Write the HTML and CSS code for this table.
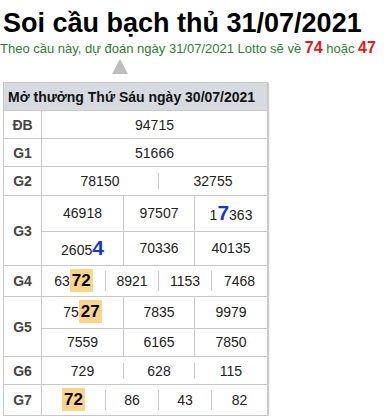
FILE: index.html
```html
<!DOCTYPE html>
<html lang="vi">
<head>
    <meta charset="UTF-8">
    <meta name="viewport" content="width=device-width, initial-scale=1.0">
    <title>Soi cầu bạch thủ 31/07/2021</title>
    <link rel="stylesheet" href="styles.css">
</head>
<body>
    <h1 class="title">Soi cầu bạch thủ 31/07/2021</h1>
    <p class="predict">Theo cầu này, dự đoán ngày 31/07/2021 Lotto sẽ về <b>74</b> hoặc <b>47</b></p>
    <div class="arrow"></div>

    <!-- Kết quả ngày hôm trước -->
    <table class="result">
        <tr class="head">
            <th colspan="2">Mở thưởng Thứ Sáu ngày 30/07/2021</th>
        </tr>
        <tr class="r28">
            <th>ĐB</th>
            <td>94715</td>
        </tr>
        <tr class="r28">
            <th>G1</th>
            <td>51666</td>
        </tr>
        <tr class="r29">
            <th>G2</th>
            <td class="inner">
                <table class="sub g2"><tr><td>78150</td><td>32755</td></tr></table>
            </td>
        </tr>
        <tr>
            <th>G3</th>
            <td class="inner">
                <table class="sub g3">
                    <tr class="r35"><td>46918</td><td>97507</td><td>1<span class="hit">7</span>363</td></tr>
                    <tr class="r34"><td>2605<span class="hit">4</span></td><td>70336</td><td>40135</td></tr>
                </table>
            </td>
        </tr>
        <tr class="r31">
            <th>G4</th>
            <td class="inner">
                <table class="sub g4"><tr><td>63<span class="lo">72</span></td><td>8921</td><td>1153</td><td>7468</td></tr></table>
            </td>
        </tr>
        <tr>
            <th>G5</th>
            <td class="inner">
                <table class="sub g3">
                    <tr class="r31"><td>75<span class="lo">27</span></td><td>7835</td><td>9979</td></tr>
                    <tr class="r28"><td>7559</td><td>6165</td><td>7850</td></tr>
                </table>
            </td>
        </tr>
        <tr class="r28">
            <th>G6</th>
            <td class="inner">
                <table class="sub g3"><tr><td>729</td><td>628</td><td>115</td></tr></table>
            </td>
        </tr>
        <tr class="r31">
            <th>G7</th>
            <td class="inner">
                <table class="sub g4"><tr><td><span class="lo">72</span></td><td>86</td><td>43</td><td>82</td></tr></table>
            </td>
        </tr>
    </table>
</body>
</html>
```

FILE: styles.css
```css
body {
    font-family: "Liberation Sans", Arial, sans-serif;
    margin: 0;
    padding: 0 3px;
    color: #222;
}
.title {
    font-size: 27px;
    margin: 0;
    padding-top: 8px;
    line-height: 30px;
    color: #000;
}
.predict {
    margin: 2px 0 0 -3px;
    font-size: 13px;
    line-height: 16px;
    color: #2e7d32;
    white-space: nowrap;
}
.predict b {
    color: #e01b1b;
    font-size: 16px;
}
.arrow {
    width: 0;
    height: 0;
    margin: 2px 0 0 109px;
    border-left: 8px solid transparent;
    border-right: 8px solid transparent;
    border-bottom: 15px solid #bdbdbd;
}
.result {
    margin-top: 8px;
    width: 265px;
    border-collapse: collapse;
    font-size: 14px;
    box-shadow: 1px 1px 1px #ccc;
}
.result th,
.result td {
    border: 1px solid #c8c8c8;
    text-align: center;
    padding: 0;
}
.result > tbody > tr > th {
    width: 37px;
    color: #444;
    font-size: 14px;
}
.result .head th {
    background-color: #d7dae0;
    color: #111;
    text-align: left;
    padding-left: 4px;
    height: 27px;
}
.r28 { height: 28px; }
.r29 { height: 29px; }
.r31 { height: 31px; }
.r34 { height: 34px; }
.r35 { height: 35px; }
.result td.inner {
    padding: 0;
    border: 1px solid #c8c8c8;
}
.sub {
    width: 100%;
    height: 100%;
    border-collapse: collapse;
    border-style: hidden;
}
.sub td {
    border: 1px solid #c8c8c8;
}
.g2 td:first-child { width: 116px; }
.g3 td:nth-child(1) { width: 81px; }
.g3 td:nth-child(2) { width: 70px; }
.g4 td:nth-child(1) { width: 63px; }
.g4 td:nth-child(2) { width: 52px; }
.g4 td:nth-child(3) { width: 52px; }
.hit {
    color: #1537d0;
    font-size: 21px;
    font-weight: bold;
}
.lo {
    background-color: #fdd48a;
    font-weight: bold;
    font-size: 17px;
    padding: 2px 2px;
    color: #000;
}
```
